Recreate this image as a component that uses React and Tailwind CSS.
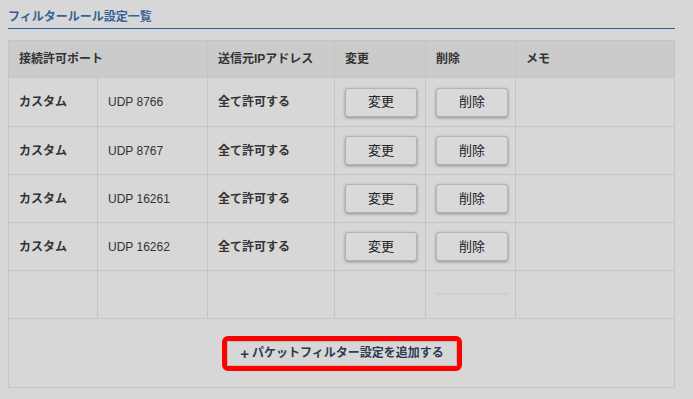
export default function App() {
  const rows = [
    ["UDP 8766"],
    ["UDP 8767"],
    ["UDP 16261"],
    ["UDP 16262"],
  ];
  const font = { fontFamily: '"Liberation Sans", "Noto Sans CJK JP", sans-serif' };
  const cell = "border border-[#c4c4c4] px-[10px] align-middle";
  const btn =
    "w-[72px] h-[29px] bg-[#d9d9d9] border border-[#b3b3b3] rounded-[3px] shadow-[0_1px_3px_rgba(0,0,0,0.35)] text-[13px] text-[#222]";
  return (
    <div className="w-[693px] h-[399px] bg-[#d7d7d7] text-[#333] overflow-hidden" style={font}>
      <div className="pl-[8px] pr-[18px] pt-[9px]">
        <div className="h-[20px] border-b-[1.5px] border-[#1f5fa8] text-[12px] font-bold text-[#356399] leading-[16px]">
          フィルタールール設定一覧
        </div>
        <div className="mt-[11px] border border-[#c4c4c4]">
          <table className="w-full border-collapse table-fixed -m-px" style={{ width: "calc(100% + 2px)" }}>
            <colgroup>
              <col className="w-[89px]" />
              <col className="w-[110px]" />
              <col className="w-[127px]" />
              <col className="w-[91px]" />
              <col className="w-[90px]" />
              <col />
            </colgroup>
            <thead>
              <tr className="h-[37px] bg-[#cbcbcb] text-[12px] font-bold text-left">
                <th colSpan={2} className={cell}>接続許可ポート</th>
                <th className={cell}>送信元IPアドレス</th>
                <th className={cell}>変更</th>
                <th className={cell}>削除</th>
                <th className={cell}>メモ</th>
              </tr>
            </thead>
            <tbody className="text-[12px]">
              {rows.map((r, i) => (
                <tr key={i} className={i === 0 ? "h-[49px]" : "h-[48px]"}>
                  <td className={cell + " font-bold"}>カスタム</td>
                  <td className={cell}>{r[0]}</td>
                  <td className={cell + " font-bold"}>全て許可する</td>
                  <td className={cell}>
                    <button className={btn}>変更</button>
                  </td>
                  <td className={cell}>
                    <button className={btn}>削除</button>
                  </td>
                  <td className={cell}></td>
                </tr>
              ))}
              <tr className="h-[48px]">
                <td className={cell}></td>
                <td className={cell}></td>
                <td className={cell}></td>
                <td className={cell}></td>
                <td className={cell + " align-bottom pb-[5px]"}>
                  <div className="h-[2px] w-[72px] shadow-[0_1px_2px_rgba(0,0,0,0.08)]"></div>
                </td>
                <td className={cell}></td>
              </tr>
              <tr className="h-[69px]">
                <td colSpan={6} className="border border-[#c4c4c4]">
                  <div className="flex justify-center">
                    <div className="border-[5px] border-[#ff0000] rounded-[6px] ml-[1px]">
                      <div className="w-[230px] h-[25px] border border-[#bcbcbc] flex items-center justify-center text-[12px] font-bold text-[#2c3b52]">
                        <span className="text-[15px] mr-[3px] leading-none">+</span>パケットフィルター設定を追加する
                      </div>
                    </div>
                  </div>
                </td>
              </tr>
            </tbody>
          </table>
        </div>
      </div>
    </div>
  );
}
